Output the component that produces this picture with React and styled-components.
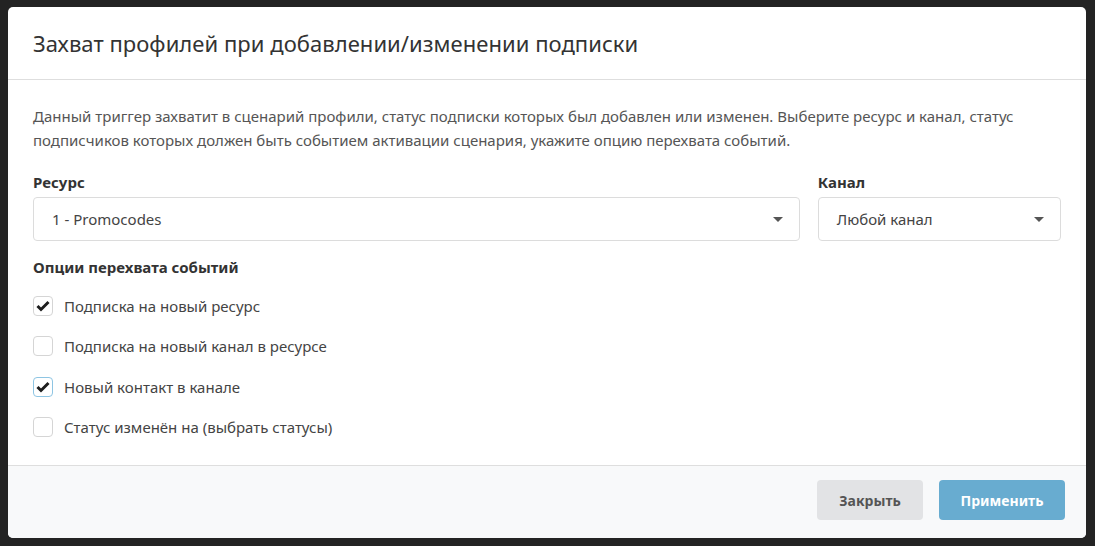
import React, { useState } from "react";
import styled, { createGlobalStyle } from "styled-components";

const GlobalStyle = createGlobalStyle`
  html, body {
    margin: 0;
    padding: 0;
    background: #232323;
    font-family: "Noto Sans", "Open Sans", sans-serif;
  }
`;

const Backdrop = styled.div`
  min-height: 546px;
  padding: 7px 9px 8px 8px;
  box-sizing: border-box;
`;

const Modal = styled.div`
  background: #fff;
  border-radius: 5px;
  overflow: hidden;
  display: flex;
  flex-direction: column;
  height: 531px;
`;

const Header = styled.div`
  height: 72px;
  display: flex;
  align-items: center;
  padding: 0 25px;
  border-bottom: 1px solid #dedede;
`;

const Title = styled.h2`
  margin: 0;
  font-size: 22px;
  font-weight: 400;
  color: #333;
  letter-spacing: 0.05px;
`;

const Body = styled.div`
  flex: 1;
  padding: 24px 25px 0;
  color: #555;
`;

const Description = styled.p`
  margin: 0 0 20px;
  font-size: 15px;
  line-height: 24px;
`;

const Row = styled.div`
  display: flex;
  gap: 18px;
`;

const Field = styled.div`
  flex: ${(p) => p.$grow || 1};
  display: flex;
  flex-direction: column;
`;

const Label = styled.div`
  font-size: 15px;
  font-weight: 700;
  color: #333;
  line-height: 20px;
  margin-bottom: 5px;
`;

const Select = styled.div`
  height: 44px;
  box-sizing: border-box;
  border: 1px solid #dcdcdc;
  border-radius: 4px;
  display: flex;
  align-items: center;
  justify-content: space-between;
  padding: 0 16px 0 18px;
  font-size: 15px;
  color: #444;
`;

const Caret = styled.span`
  width: 0;
  height: 0;
  border-left: 5px solid transparent;
  border-right: 5px solid transparent;
  border-top: 5px solid #555;
`;

const OptionsLabel = styled(Label)`
  margin-top: 16px;
  margin-bottom: 9px;
`;

const CheckRow = styled.label`
  display: flex;
  align-items: center;
  gap: 11px;
  height: 40.3px;
  font-size: 15px;
  color: #444;
  cursor: pointer;
`;

const Box = styled.span`
  width: 20px;
  height: 20px;
  box-sizing: border-box;
  border: 1px solid ${(p) => (p.$focus ? "#8ec5e3" : "#d5d5d5")};
  border-radius: 4px;
  display: flex;
  align-items: center;
  justify-content: center;
  background: #fff;
`;

const Footer = styled.div`
  height: 73px;
  box-sizing: border-box;
  border-top: 1px solid #dedede;
  background: #f8f9fa;
  display: flex;
  align-items: center;
  justify-content: flex-end;
  gap: 16px;
  padding: 0 21px 4px 0;
`;

const Button = styled.button`
  height: 40px;
  border: none;
  border-radius: 4px;
  padding: 0;
  width: ${(p) => (p.$primary ? 126 : 106)}px;
  font-family: inherit;
  font-size: 14px;
  font-weight: 700;
  background: ${(p) => (p.$primary ? "#68acd0" : "#e2e3e5")};
  color: ${(p) => (p.$primary ? "#fff" : "#555")};
  cursor: pointer;
`;

const Check = () => (
  <svg width="14" height="12" viewBox="0 0 14 12">
    <path d="M1.5 6 L5 9.5 L12.5 2" fill="none" stroke="#1e1e1e" strokeWidth="3" />
  </svg>
);

const options = [
  "Подписка на новый ресурс",
  "Подписка на новый канал в ресурсе",
  "Новый контакт в канале",
  "Статус изменён на (выбрать статусы)",
];

export default function App() {
  const [checked, setChecked] = useState([true, false, true, false]);
  const toggle = (i) => setChecked((c) => c.map((v, j) => (j === i ? !v : v)));

  return (
    <>
      <GlobalStyle />
      <Backdrop>
        <Modal>
          <Header>
            <Title>Захват профилей при добавлении/изменении подписки</Title>
          </Header>
          <Body>
            <Description>
              Данный триггер захватит в сценарий профили, статус подписки которых был добавлен или изменен. Выберите ресурс и канал, статус подписчиков которых должен быть событием активации сценария, укажите опцию перехвата событий.
            </Description>
            <Row>
              <Field $grow={766}>
                <Label>Ресурс</Label>
                <Select>
                  1 - Promocodes
                  <Caret />
                </Select>
              </Field>
              <Field $grow={243}>
                <Label>Канал</Label>
                <Select>
                  Любой канал
                  <Caret />
                </Select>
              </Field>
            </Row>
            <OptionsLabel>Опции перехвата событий</OptionsLabel>
            {options.map((o, i) => (
              <CheckRow key={o} onClick={() => toggle(i)}>
                <Box $focus={i === 2}>{checked[i] && <Check />}</Box>
                {o}
              </CheckRow>
            ))}
          </Body>
          <Footer>
            <Button>Закрыть</Button>
            <Button $primary>Применить</Button>
          </Footer>
        </Modal>
      </Backdrop>
    </>
  );
}
